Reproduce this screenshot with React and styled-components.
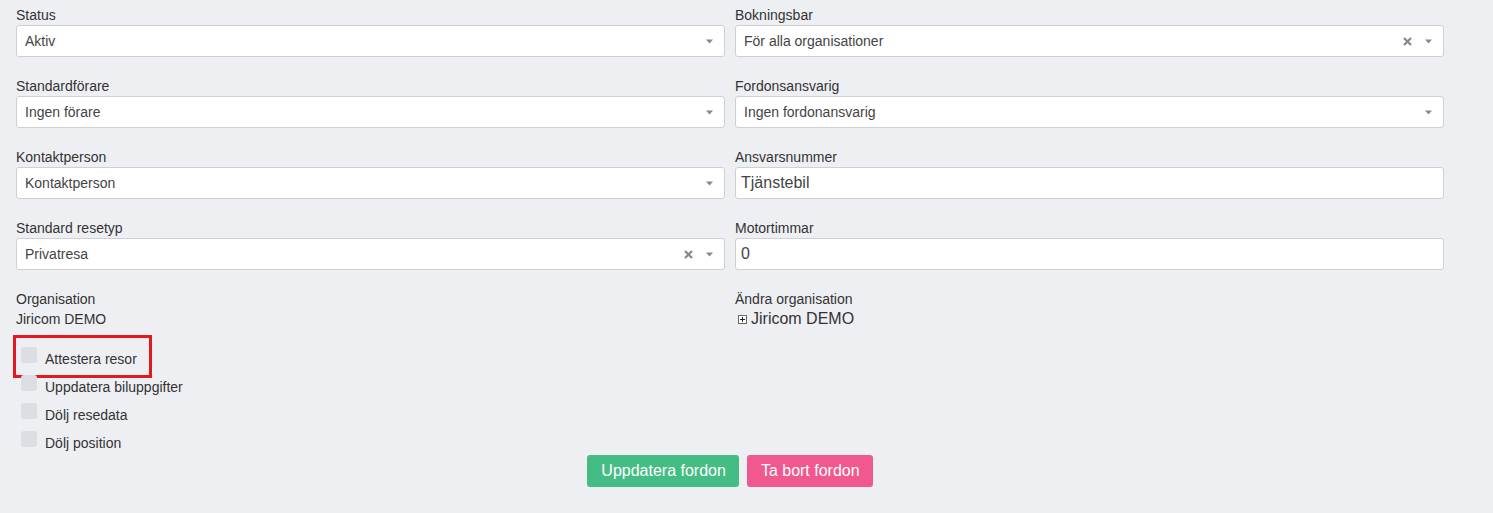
import styled, { createGlobalStyle } from 'styled-components';

const GlobalStyle = createGlobalStyle`
    html, body {
        margin: 0;
        background: #eeeff3;
        font-family: 'Liberation Sans', Arial, sans-serif;
        color: #333;
    }
`;

export default function App() {
    return (
        <>
            <GlobalStyle />
            <StyledPage>
                <FormGrid>
                    <Field>
                        <Label>Status</Label>
                        <Select value='Aktiv' />
                    </Field>
                    <Field>
                        <Label>Bokningsbar</Label>
                        <Select value='För alla organisationer' clearable />
                    </Field>
                    <Field>
                        <Label>Standardförare</Label>
                        <Select value='Ingen förare' />
                    </Field>
                    <Field>
                        <Label>Fordonsansvarig</Label>
                        <Select value='Ingen fordonansvarig' />
                    </Field>
                    <Field>
                        <Label>Kontaktperson</Label>
                        <Select value='Kontaktperson' />
                    </Field>
                    <Field>
                        <Label>Ansvarsnummer</Label>
                        <TextInput defaultValue='Tjänstebil' />
                    </Field>
                    <Field>
                        <Label>Standard resetyp</Label>
                        <Select value='Privatresa' clearable />
                    </Field>
                    <Field>
                        <Label>Motortimmar</Label>
                        <TextInput defaultValue='0' />
                    </Field>
                    <Field>
                        <Label>Organisation</Label>
                        <Value>Jiricom DEMO</Value>
                    </Field>
                    <Field>
                        <Label>Ändra organisation</Label>
                        <TreeNode>
                            <PlusBox>
                                <svg width='9' height='9' viewBox='0 0 9 9'>
                                    <rect x='0.5' y='0.5' width='8' height='8' fill='#fff' stroke='#666' />
                                    <path d='M2 4.5h5M4.5 2v5' stroke='#222' />
                                </svg>
                            </PlusBox>
                            Jiricom DEMO
                        </TreeNode>
                    </Field>
                </FormGrid>
                <CheckList>
                    <CheckRow $highlight>
                        <CheckBox />
                        Attestera resor
                    </CheckRow>
                    <CheckRow>
                        <CheckBox />
                        Uppdatera biluppgifter
                    </CheckRow>
                    <CheckRow>
                        <CheckBox />
                        Dölj resedata
                    </CheckRow>
                    <CheckRow>
                        <CheckBox />
                        Dölj position
                    </CheckRow>
                </CheckList>
                <ButtonBar>
                    <Button $variant='success'>Uppdatera fordon</Button>
                    <Button $variant='danger'>Ta bort fordon</Button>
                </ButtonBar>
            </StyledPage>
        </>
    );
}

function Select({ value, clearable }) {
    return (
        <SelectBox>
            <span>{value}</span>
            <Controls>
                {clearable && (
                    <svg width='9' height='9' viewBox='0 0 9 9'>
                        <path d='M1 1l7 7M8 1l-7 7' stroke='#888' strokeWidth='2.2' />
                    </svg>
                )}
                <svg width='7' height='5' viewBox='0 0 7 5'>
                    <path d='M0 0.5h7L3.5 4.5z' fill='#888' />
                </svg>
            </Controls>
        </SelectBox>
    );
}

const StyledPage = styled.div`
    width: 1428px;
    padding: 5px 16px 0;
`;

const FormGrid = styled.div`
    display: grid;
    grid-template-columns: 709px 709px;
    column-gap: 10px;
    row-gap: 19px;
`;

const Field = styled.div`
    display: flex;
    flex-direction: column;
`;

const Label = styled.div`
    font-size: 14px;
    line-height: 20px;
    color: #333;
`;

const Value = styled.div`
    font-size: 14px;
    line-height: 20px;
    color: #333;
`;

const SelectBox = styled.div`
    box-sizing: border-box;
    height: 32px;
    display: flex;
    align-items: center;
    justify-content: space-between;
    padding: 0 11px 0 8px;
    background: #fff;
    border: 1px solid #cfd0d4;
    border-radius: 3px;
    font-size: 14px;
    color: #444;
`;

const Controls = styled.div`
    display: flex;
    align-items: center;
    gap: 13px;
`;

const TextInput = styled.input`
    box-sizing: border-box;
    height: 32px;
    padding: 0 5px;
    background: #fff;
    border: 1px solid #cfd0d4;
    border-radius: 3px;
    font-family: inherit;
    font-size: 16px;
    color: #444;
    outline: none;
`;

const TreeNode = styled.div`
    display: flex;
    align-items: center;
    gap: 4px;
    padding-left: 3px;
    font-size: 16px;
    line-height: 20px;
    color: #333;
`;

const PlusBox = styled.span`
    display: flex;
`;

const CheckList = styled.div`
    display: flex;
    flex-direction: column;
    gap: 8px;
    margin-top: 20px;
`;

const CheckRow = styled.label`
    position: relative;
    display: flex;
    align-items: flex-start;
    gap: 8px;
    padding-left: 5px;
    font-size: 14px;
    line-height: 20px;
    color: #333;

    ${({ $highlight }) =>
        $highlight &&
        `
        &::after {
            content: '';
            position: absolute;
            left: -3px;
            top: -14px;
            width: 133px;
            height: 37px;
            border: 3px solid #e3191f;
        }
    `}
`;

const CheckBox = styled.span`
    width: 16px;
    height: 16px;
    margin-top: -2px;
    border-radius: 3px;
    background: #dcdee3;
`;

const ButtonBar = styled.div`
    display: flex;
    justify-content: center;
    gap: 8px;
    margin-top: 2px;
`;

const Button = styled.button`
    height: 32px;
    padding: 0 13px 0 14px;
    border: none;
    border-radius: 3px;
    font-family: inherit;
    font-size: 16px;
    color: #fff;
    background: ${({ $variant }) => ($variant === 'danger' ? '#f0588e' : '#43bd84')};
`;
